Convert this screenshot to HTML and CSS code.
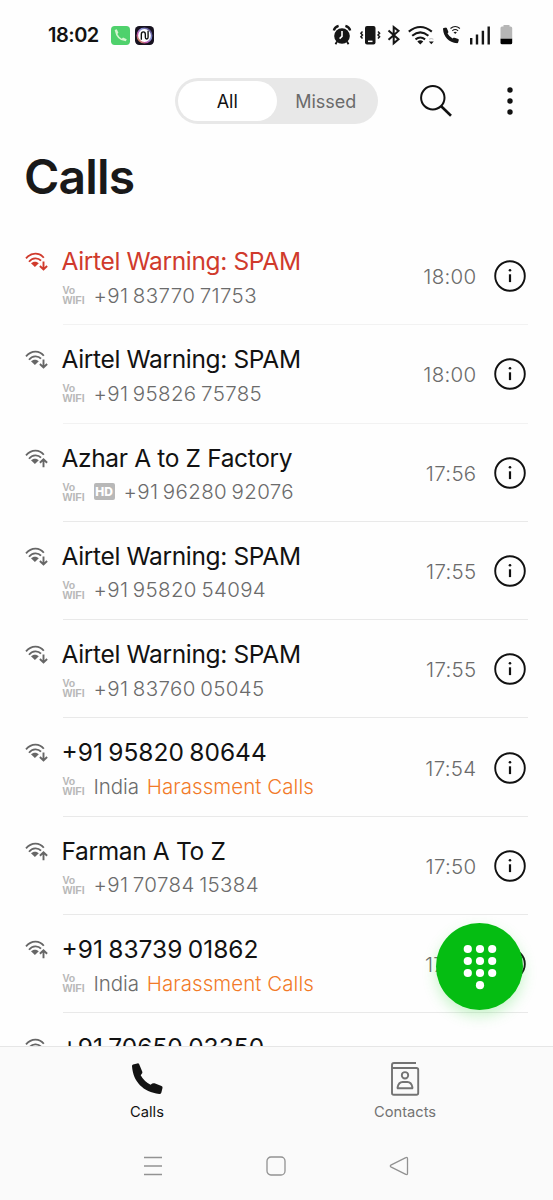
FILE: index.html
```
<!DOCTYPE html>
<html lang="en">
<head>
<meta charset="utf-8">
<title>Calls</title>
<link rel="stylesheet" href="styles.css">
</head>
<body>
<svg class="defs" width="0" height="0">
  <symbol id="wifi" viewBox="0 0 24 20">
    <g fill="none" stroke="currentColor" stroke-width="1.8">
      <path d="M1 6.3C6.500.1 14.500.1 18.800 5.800"/>
      <path d="M4 9.700C7.500 5.400 13 5.400 16 8.600"/>
    </g>
    <path d="M6 11.300c2-2.200 6-2.200 7.800 0L9.900 15z" fill="currentColor"/>
  </symbol>
  <symbol id="in" viewBox="0 0 24 20">
    <use href="#wifi"/>
    <path d="M18.500 9.500v8M14.900 14l3.600 3.500 3.600-3.500" fill="none" stroke="currentColor" stroke-width="1.900"/>
  </symbol>
  <symbol id="out" viewBox="0 0 24 20">
    <use href="#wifi"/>
    <path d="M18.500 18.200v-8M14.900 13.700l3.600-3.500 3.600 3.500" fill="none" stroke="currentColor" stroke-width="1.900"/>
  </symbol>
  <symbol id="info" viewBox="0 0 32 32">
    <circle cx="16" cy="16" r="14.800" fill="none" stroke="#111" stroke-width="1.900"/>
    <path d="M16 14.300v7.800" stroke="#111" stroke-width="2.200"/>
    <circle cx="16" cy="10.300" r="1.300" fill="#111"/>
  </symbol>
  <symbol id="handset" viewBox="0 0 32 32">
    <path d="M1 3.300Q.8 2 2 1.400L6.300.4Q7.800.1 8.300 1.500L11.300 8.800Q11.800 10 10.600 11L9.700 12.200Q13 18.300 19.600 21.800L21.200 20.600Q22.200 19.900 23.500 20.300L30.500 23Q31.900 23.600 31.500 25L30.300 29.800Q29.800 31.200 28.300 31.100C12 28.800 2.200 19 1 3.300z" fill="currentColor"/>
  </symbol>
</svg>
<div class="phone">
  <header class="status">
    <span class="clock">18:02</span>
    <svg class="app" viewBox="0 0 18 18"><rect width="18" height="18" rx="3.500" fill="#4fd16c"/><path d="M3.500 3.800l2-.7 1.500 3.200-1 1.200q1.500 3 4.200 4.500l1.200-1.100 3.500 1.600-.8 2q-9-.5-10.600-10.700z" fill="#d5f5cf"/></svg>
    <svg class="app app2" viewBox="0 0 18 18">
      <defs><linearGradient id="rb" x1="0" y1="1" x2="1" y2="0"><stop offset="0" stop-color="#d8b13c"/><stop offset=".3" stop-color="#c24fa5"/><stop offset=".6" stop-color="#8d9be0"/><stop offset="1" stop-color="#48306b"/></linearGradient></defs>
      <rect width="18" height="18" rx="4" fill="#17121f"/><circle cx="9" cy="9" r="6.800" fill="#fff" stroke="url(#rb)" stroke-width="1.500"/>
      <path d="M6 13V8q0-2.400 1.900-2.400T9.800 8v2.600q0 1.700 1.300 1.700t1.300-1.700V4.500" fill="none" stroke="#111" stroke-width="1.300"/>
    </svg>
    <svg class="sys" viewBox="0 0 190 24" fill="#161616">
      <g><circle cx="10" cy="13" r="7.800"/><path d="M10 8v5.400l-2.400 2.200" fill="none" stroke="#fff" stroke-width="1.600"/><path d="M1.800 7.500q.8-3.400 4.800-4.600M13.400 2.900q4 1.200 4.800 4.600" fill="none" stroke="#161616" stroke-width="2.300"/><path d="M5 18.500l-1.500 2.700M15 18.500l1.500 2.700" stroke="#161616" stroke-width="1.800"/></g>
      <rect x="33" y="3" width="10.500" height="18.500" rx="2"/><rect x="36" y="17.600" width="4.500" height="1.500" fill="#fff"/>
      <path d="M30.500 8.500l-1.600 1.700 1.600 1.800-1.600 1.800 1.600 1.800M46 8.500l1.600 1.700-1.600 1.800 1.600 1.800-1.600 1.800" fill="none" stroke="#161616" stroke-width="1.500"/>
      <path d="M56.500 7.500l10 8.800-4.800 4V4l4.800 3.900-10 8.800" fill="none" stroke="#161616" stroke-width="2"/>
      <g fill="none" stroke="#161616" stroke-width="2.100"><path d="M76.800 8.600q11.500-9.200 23 0M80.200 12.700q8.100-6.600 16.200 0M83.500 16.300q4.800-3.500 9.600 0"/></g><path d="M85.300 18.400q3-2.200 6 0L88.300 21.500zM96.800 18.500h5l-2.500 2.700z"/><path d="M97 16.200q2.200-1.300 4.400 0" fill="none" stroke="#bbb"/>
      <svg x="110.500" y="4" width="16.500" height="17" viewBox="0 0 32 32" color="#161616"><use href="#handset"/></svg>
      <g fill="none" stroke="#161616" stroke-width="1.100"><path d="M118.500 5.500q4.700-4 9.400 0M120.300 7.800q2.900-2.500 5.800 0"/></g><path d="M121.500 9.300q1.700-1 3.400 0l-1.700 1.700z"/>
      <path d="M138 15h2.400v6.500H138zM143.800 11.500h2.400v10h-2.400zM149.700 7.800h2.400v13.700h-2.400zM155.500 3.500h2.400v18h-2.400z"/>
      <path d="M168.500 5q0-1.500 1.500-1.500h1.500V2h6v1.500h1q1.700 0 1.700 1.500v11h-11.700z" fill="#b6b6b6"/><path d="M168.500 15.700h11.700v4q0 1.600-1.600 1.600h-8.500q-1.600 0-1.600-1.600z" fill="#000"/>
    </svg>
  </header>
  <div class="toolbar">
    <div class="segments"><span class="seg on">All</span><span class="seg">Missed</span></div>
    <svg class="search" viewBox="0 0 34 34" fill="none" stroke="#111"><circle cx="13.800" cy="13.800" r="11.700" stroke-width="2"/><path d="M22.200 22.200L32 31.700" stroke-width="2.600"/></svg>
    <svg class="more" viewBox="0 0 6 30" fill="#111"><circle cx="3" cy="4" r="2.700"/><circle cx="3" cy="15" r="2.700"/><circle cx="3" cy="26" r="2.700"/></svg>
  </div>
  <h1 class="title">Calls</h1>
  <main class="list">
    <div class="row missed"><svg class="dir"><use href="#in"/></svg><div class="body faint"><div class="texts"><div class="name">Airtel Warning: SPAM</div><div class="sub"><span class="vo">Vo<br>WIFI</span><span class="num">+91 83770 71753</span></div></div><time>18:00</time><svg class="info"><use href="#info"/></svg></div></div>
    <div class="row"><svg class="dir"><use href="#in"/></svg><div class="body faint"><div class="texts"><div class="name">Airtel Warning: SPAM</div><div class="sub"><span class="vo">Vo<br>WIFI</span><span class="num">+91 95826 75785</span></div></div><time>18:00</time><svg class="info"><use href="#info"/></svg></div></div>
    <div class="row"><svg class="dir"><use href="#out"/></svg><div class="body"><div class="texts"><div class="name">Azhar A to Z Factory</div><div class="sub"><span class="vo">Vo<br>WIFI</span><span class="hd">HD</span><span class="num">+91 96280 92076</span></div></div><time>17:56</time><svg class="info"><use href="#info"/></svg></div></div>
    <div class="row"><svg class="dir"><use href="#in"/></svg><div class="body"><div class="texts"><div class="name">Airtel Warning: SPAM</div><div class="sub"><span class="vo">Vo<br>WIFI</span><span class="num">+91 95820 54094</span></div></div><time>17:55</time><svg class="info"><use href="#info"/></svg></div></div>
    <div class="row"><svg class="dir"><use href="#in"/></svg><div class="body"><div class="texts"><div class="name">Airtel Warning: SPAM</div><div class="sub"><span class="vo">Vo<br>WIFI</span><span class="num">+91 83760 05045</span></div></div><time>17:55</time><svg class="info"><use href="#info"/></svg></div></div>
    <div class="row"><svg class="dir"><use href="#in"/></svg><div class="body"><div class="texts"><div class="name digits">+91 95820 80644</div><div class="sub"><span class="vo">Vo<br>WIFI</span><span class="place">India</span><span class="tag">Harassment Calls</span></div></div><time>17:54</time><svg class="info"><use href="#info"/></svg></div></div>
    <div class="row"><svg class="dir"><use href="#out"/></svg><div class="body"><div class="texts"><div class="name">Farman A To Z</div><div class="sub"><span class="vo">Vo<br>WIFI</span><span class="num">+91 70784 15384</span></div></div><time>17:50</time><svg class="info"><use href="#info"/></svg></div></div>
    <div class="row"><svg class="dir"><use href="#out"/></svg><div class="body"><div class="texts"><div class="name digits">+91 83739 01862</div><div class="sub"><span class="vo">Vo<br>WIFI</span><span class="place">India</span><span class="tag">Harassment Calls</span></div></div><time>17:48</time><svg class="info"><use href="#info"/></svg></div></div>
    <div class="row"><svg class="dir"><use href="#wifi"/></svg><div class="body"><div class="texts"><div class="name digits">+91 70650 03350</div></div></div></div>
  </main>
  <div class="fab"><svg viewBox="0 0 34 46" fill="#fff"><circle cx="4.800" cy="5" r="4.100"/><circle cx="17" cy="5" r="4.100"/><circle cx="29.200" cy="5" r="4.100"/><circle cx="4.800" cy="17" r="4.100"/><circle cx="17" cy="17" r="4.100"/><circle cx="29.200" cy="17" r="4.100"/><circle cx="4.800" cy="29" r="4.100"/><circle cx="17" cy="29" r="4.100"/><circle cx="29.200" cy="29" r="4.100"/><circle cx="17" cy="41.200" r="4.100"/></svg></div>
  <footer class="bottom">
    <nav class="tabs">
      <div class="tab active"><svg class="tabicon"><use href="#handset"/></svg><span>Calls</span></div>
      <div class="tab"><svg class="tabicon" viewBox="0 0 32 34" fill="none" stroke="#737373" stroke-width="1.900"><path d="M27 1H5Q3 1 3 3v28q0 1.800 1.800 1.800h22.600q1.800 0 1.800-1.800V7.800Q29.200 6 27.400 6H3"/><circle cx="16" cy="13.300" r="3.200"/><path d="M9 26.300q-.6 0-.4-1 1-5.300 5-5.300h4.800q4 0 5 5.300.2 1-.4 1z"/></svg><span>Contacts</span></div>
    </nav>
    <div class="system">
      <svg viewBox="0 0 20 20"><path d="M1 1.500h18M1 10h18M1 18.500h18"/></svg>
      <svg viewBox="0 0 20 20"><rect x="1" y="1" width="18" height="18" rx="4"/></svg>
      <svg viewBox="0 0 20 20"><path d="M18.500 2.800v14.400q0 2-1.700 1.100L2.300 11.100q-2-1.100 0-2.200L16.800 1.700q1.700-.9 1.700 1.100z"/></svg>
    </div>
  </footer>
</div>
</body>
</html>
```
FILE: styles.css
```
* { box-sizing: border-box; }
body { margin: 0; background: #fefefe; font-family: Inter, "Liberation Sans", sans-serif; color: #121212; }
.defs { position: absolute; }
.phone { position: relative; width: 553px; height: 1200px; display: flex; flex-direction: column; overflow: hidden; white-space: nowrap; }
.status { height: 71px; display: flex; align-items: center; padding: 0 31px 0 48px; }
.clock { font-size: 20px; font-weight: 600; width: 63px; letter-spacing: -.5px; line-height: 24px; margin-top: -1px; }
.app { width: 19px; height: 19px; }
.app2 { margin-left: 5px; }
.sys { width: 190px; height: 24px; margin-left: auto; margin-top: -1px; }
.toolbar { height: 60px; display: flex; align-items: center; padding: 0 40px 0 175px; }
.segments { width: 203px; height: 46px; border-radius: 23px; background: #e8e8e8; padding: 3px; display: flex; }
.seg { flex: 1; display: flex; align-items: center; justify-content: center; font-size: 18px; color: #6b6b6b; border-radius: 20px; }
.on { background: #fff; color: #121212; }
.search { width: 34px; height: 34px; margin-left: 41px; }
.more { width: 6px; height: 30px; margin-left: auto; }
.title { margin: 0; height: 96px; padding-left: 24px; font-size: 48px; line-height: 92px; font-weight: 600; letter-spacing: -.8px; color: #191919; }
.list { flex: 1; min-height: 0; overflow: hidden; }
.row { height: 98.300px; display: flex; padding: 0 25px 0 25px; color: #666; }
.dir { width: 24px; height: 20px; margin-top: 25px; margin-right: 13px; flex: none; overflow: visible; }
.body { flex: 1; display: flex; align-items: center; border-bottom: 1px solid #e9e9e9; margin-left: 1px; }
.body.faint { border-color: #f2f2f2; }
.texts { flex: 1; align-self: stretch; padding-top: 19px; margin-left: -1.500px; }
.name { font-size: 24.500px; line-height: 31px; color: #121212; letter-spacing: -.35px; }
.missed .dir, .missed .name { color: #d03a2c; }
.name.digits { letter-spacing: 0; word-spacing: -1.500px; }
.sub { height: 28px; margin-top: 4px; display: flex; align-items: center; font-size: 20.500px; font-weight: 300; color: #6b6b6b; }
.vo { width: 32px; padding-left: 1px; font: 700 10.500px/10px "Liberation Sans", sans-serif; color: #b8b8b8; }
.hd { width: 21px; height: 17px; margin-right: 9px; border-radius: 2px; background: #b8b8b8; color: #fff; font-size: 12px; font-weight: 800; line-height: 17px; text-align: center; }
.num { letter-spacing: .35px; word-spacing: -1.600px; }
.place { margin-right: 8px; letter-spacing: -.1px; }
.tag { color: #f27a28; letter-spacing: .05px; }
time { font-size: 20.500px; font-weight: 300; color: #6b6b6b; letter-spacing: .3px; margin: 2px 17.500px 0 0; }
.info { width: 32px; height: 32px; margin: 1px 2px 0 0; }
.fab { position: absolute; left: 436px; top: 923px; width: 87px; height: 87px; border-radius: 50%; background: #05bd12; display: flex; align-items: center; justify-content: center; box-shadow: 0 6px 14px rgba(60, 220, 70, .28); }
.fab svg { width: 34px; height: 46px; }
.bottom { height: 154px; flex: none; background: #fafafa; border-top: 1px solid #e6e6e6; }
.tabs { display: flex; height: 98px; padding: 0 19px 0 18px; }
.tab { flex: 1; display: flex; flex-direction: column; align-items: center; padding-top: 15px; font-size: 14.700px; color: #737373; }
.active { color: #121212; }
.tabicon { width: 32px; height: 34px; margin-bottom: 7px; }
.system { display: flex; justify-content: space-between; padding: 11px 144px 0 143px; }
.system svg { width: 20px; height: 20px; fill: none; stroke: #929292; stroke-width: 1.300; }
```
